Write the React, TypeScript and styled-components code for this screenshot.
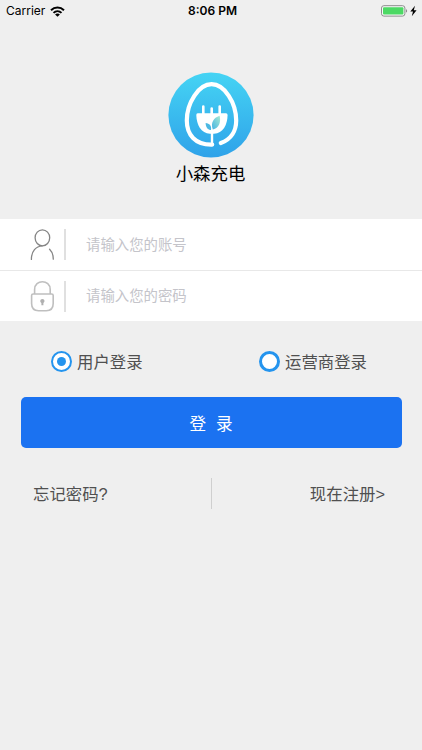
import React, { useState } from 'react';
import styled, { createGlobalStyle, css } from 'styled-components';

type LoginType = 'user' | 'operator';

const App: React.FC = () => {
  const [account, setAccount] = useState('');
  const [password, setPassword] = useState('');
  const [loginType, setLoginType] = useState<LoginType>('user');

  return (
    <>
      <GlobalStyle />
      <Screen>
        <StatusBar>
          <Carrier>
            Carrier
            <WifiIcon />
          </Carrier>
          <Clock>8:06 PM</Clock>
          <Battery>
            <BatteryIcon />
          </Battery>
        </StatusBar>

        <Brand>
          <LogoIcon />
          <BrandName>小森充电</BrandName>
        </Brand>

        <Fields>
          <Field>
            <UserIcon />
            <FieldInput
              placeholder="请输入您的账号"
              value={account}
              onChange={(e) => setAccount(e.target.value)}
            />
          </Field>
          <Field>
            <LockIcon />
            <FieldInput
              type="password"
              placeholder="请输入您的密码"
              value={password}
              onChange={(e) => setPassword(e.target.value)}
            />
          </Field>
        </Fields>

        <LoginTypes>
          <TypeOption onClick={() => setLoginType('user')}>
            <Radio $checked={loginType === 'user'} />
            <TypeName>用户登录</TypeName>
          </TypeOption>
          <TypeOption onClick={() => setLoginType('operator')}>
            <Radio $checked={loginType === 'operator'} />
            <TypeName>运营商登录</TypeName>
          </TypeOption>
        </LoginTypes>

        <LoginButton>
          <span>登</span>
          <span>录</span>
        </LoginButton>

        <Links>
          <LinkText>忘记密码?</LinkText>
          <LinkDivider />
          <LinkText $right>现在注册&gt;</LinkText>
        </Links>
      </Screen>
    </>
  );
};

export default App;

const WifiIcon = () => (
  <svg width="15" height="11" viewBox="0 0 15 11" fill="none" stroke="#000000" strokeWidth="2">
    <path d="M1 4.3C4.7.7 10.3.7 14 4.3" />
    <path d="M3.5 6.9C5.8 4.7 9.2 4.7 11.5 6.9" />
    <path d="M7.5 10.8 5.1 8.5C6.4 7.3 8.6 7.3 9.9 8.5Z" fill="#000000" stroke="none" />
  </svg>
);

const BatteryIcon = () => (
  <svg width="38" height="12" viewBox="0 0 38 12">
    <rect x="0.5" y="0.7" width="23.4" height="10.4" rx="2.4" fill="#f8f8f8" stroke="#8b8b8b" />
    <rect x="2" y="2.2" width="20.4" height="7.4" rx="1" fill="#4cd964" />
    <path d="M25 4.2C26.5 4.5 26.5 7.3 25 7.6Z" fill="#8b8b8b" />
    <path d="M34 .8 29.3 6.6H32L30.8 11.2 35.6 5.2H32.8Z" fill="#000000" />
  </svg>
);

const LogoIcon = () => (
  <svg width="86" height="86" viewBox="0 0 86 86" fill="none">
    <defs>
      <linearGradient id="logoSky" x1="0" y1="0" x2="0" y2="1">
        <stop offset="0" stopColor="#45d4f4" />
        <stop offset="1" stopColor="#2fa2e9" />
      </linearGradient>
      <linearGradient id="logoLeaf" x1="0" y1="1" x2="1" y2="0">
        <stop offset="0" stopColor="#45b4e4" />
        <stop offset="1" stopColor="#a8ead2" />
      </linearGradient>
    </defs>
    <circle cx="43" cy="43" r="42.6" fill="url(#logoSky)" />
    <path
      d="M44.2 72.6C27 73 18.8 62.5 18.8 48.5C18.8 31 30.6 12.2 43.6 12.2C56.6 12.2 68.2 31 68.2 48.5C68.2 58.5 63.4 67.3 52.8 71"
      stroke="#ffffff"
      strokeWidth="4.2"
      strokeLinecap="round"
    />
    <path d="M44 58V74" stroke="#ffffff" strokeWidth="2.4" />
    <path
      d="M35.3 34.5V42M43.7 36.5V42M51.7 34.5V42"
      stroke="#ffffff"
      strokeWidth="2.6"
      strokeLinecap="round"
    />
    <path
      d="M29.6 41.2H58Q59.6 41.2 59.6 43C59.4 53 55 61.4 46 61.8H42C33 61.4 28.6 53 28.3 43Q28.3 41.2 29.6 41.2Z"
      fill="#ffffff"
    />
    <path d="M44.8 57.5C42.4 51 45.4 45.8 51.6 43.8C53.2 49.8 51 56.5 44.8 57.5Z" fill="url(#logoLeaf)" />
    <path d="M43 58C41 57.8 37.8 57 37.6 51C41.6 51.4 43.6 53.5 43 58Z" fill="#4bb8e2" />
  </svg>
);

const UserIcon = () => (
  <svg width="24" height="32" viewBox="0 0 24 32" fill="none" stroke="#858585" strokeWidth="1.3">
    <ellipse cx="12.4" cy="8.8" rx="7.3" ry="8" />
    <path d="M1.4 30.4C1.4 22 6 17.2 12.2 16.8" strokeLinecap="round" />
    <path d="M19.6 20.2C22 22.5 23.3 26 23.3 30.2" strokeLinecap="round" />
  </svg>
);

const LockIcon = () => (
  <svg width="24" height="32" viewBox="0 0 24 32" fill="none" stroke="#bfbfbf" strokeWidth="1.6">
    <path d="M4.6 14V9.4C4.6 -.9 20.2 -.9 20.2 9.4V14" />
    <path d="M3.2 14H21.6Q23.2 14 23.2 15.6V23.6Q23.2 30.8 16.2 30.8H8.6Q1.6 30.8 1.6 23.6V15.6Q1.6 14 3.2 14Z" />
    <path
      d="M12.4 19C9.8 19 9.8 22.2 11.4 23V25.2H13.4V23C15 22.2 15 19 12.4 19Z"
      fill="#b0b0b0"
      stroke="none"
    />
  </svg>
);

const GlobalStyle = createGlobalStyle`
  * {
    box-sizing: border-box;
  }
  body {
    margin: 0;
    background-color: #efefef;
    font-family: 'Liberation Sans', 'Noto Sans CJK SC', sans-serif;
  }
`;

const Screen = styled.div`
  display: flex;
  flex-direction: column;
  height: 750px;
  background-color: #efefef;
`;

const StatusBar = styled.div`
  display: grid;
  grid-template-columns: 1fr auto 1fr;
  align-items: center;
  height: 22px;
  padding: 0 3px 0 6px;
  font-family: Inter, 'Liberation Sans', sans-serif;
  font-size: 12px;
  line-height: 14px;
  color: #000000;
`;

const Carrier = styled.div`
  display: flex;
  align-items: center;
  gap: 5px;
`;

const Clock = styled.div`
  font-weight: 600;
`;

const Battery = styled.div`
  display: flex;
  justify-content: flex-end;
`;

const Brand = styled.div`
  display: flex;
  flex-direction: column;
  align-items: center;
  height: 197px;
  padding-top: 50px;
`;

const BrandName = styled.div`
  margin-top: 3px;
  padding-right: 1px;
  font-size: 17.4px;
  line-height: 26px;
  color: #000000;
`;

const Fields = styled.div`
  height: 102px;
  background-color: #ffffff;
`;

const Field = styled.label`
  display: flex;
  align-items: center;
  height: 51px;
  padding-left: 30px;

  & + & {
    border-top: 1px solid #e8e8e8;
  }
`;

const FieldInput = styled.input`
  flex: 1;
  height: 31px;
  margin-left: 10px;
  padding: 0 0 0 20px;
  border: 0;
  border-left: 2px solid #e0e0e0;
  border-radius: 0;
  outline: none;
  background: none;
  font-family: inherit;
  font-size: 14.4px;
  color: #333333;

  &::placeholder {
    color: #c4c4ca;
  }
`;

const LoginTypes = styled.div`
  display: grid;
  grid-template-columns: 208px 1fr;
  align-items: center;
  height: 76px;
  padding: 5px 0 0 51px;
`;

const TypeOption = styled.div`
  display: flex;
  align-items: center;
  gap: 5px;
  font-size: 16.4px;
  color: #505050;
  cursor: pointer;
`;

const TypeName = styled.span`
  padding-bottom: 2px;
`;

const Radio = styled.span<{ $checked: boolean }>`
  flex: none;
  display: flex;
  align-items: center;
  justify-content: center;
  width: 21px;
  height: 21px;
  border: 3px solid #2494ee;
  border-radius: 50%;
  background-color: #ffffff;

  ${(props) =>
    props.$checked &&
    css`
      border-width: 2px;
      &::after {
        content: '';
        width: 9px;
        height: 9px;
        border-radius: 50%;
        background-color: #2494ee;
      }
    `}
`;

const LoginButton = styled.button`
  display: flex;
  align-items: center;
  justify-content: center;
  gap: 10px;
  height: 51px;
  margin: 0 20.5px;
  padding: 0;
  border: 0;
  border-radius: 5px;
  background-color: #1b72f1;
  font-family: inherit;
  font-size: 16.6px;
  color: #ffffff;
  cursor: pointer;
`;

const Links = styled.div`
  display: grid;
  grid-template-columns: 1fr 1px 1fr;
  align-items: center;
  height: 31px;
  margin-top: 30px;
  padding: 0 32px;
`;

const LinkText = styled.a<{ $right?: boolean }>`
  padding: ${(props) => (props.$right ? '0 5px 2px 0' : '0 0 2px 1px')};
  font-size: 16.4px;
  color: #505050;
  text-align: ${(props) => (props.$right ? 'right' : 'left')};
  cursor: pointer;
`;

const LinkDivider = styled.div`
  height: 31px;
  background-color: #cfcfcf;
`;
